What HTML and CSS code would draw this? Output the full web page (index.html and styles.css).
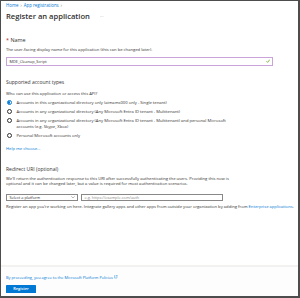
FILE: index.html
```html
<!DOCTYPE html>
<html lang="en">
<head>
<meta charset="utf-8">
<title>Register an application</title>
<link rel="stylesheet" href="styles.css">
</head>
<body>
<div class="frame">
  <nav class="crumbs">
    <a class="crumb">Home</a><span class="sep">&#8250;</span><a class="crumb">App registrations</a><span class="sep">&#8250;</span>
  </nav>
  <header class="head">
    <h1 class="title">Register an application</h1>
    <span class="more">&middot;&middot;&middot;</span>
  </header>
  <main class="content">
    <section class="sec sec-name">
      <h2 class="label"><span class="req">*</span> Name</h2>
      <p class="text desc">The user-facing display name for this application (this can be changed later).</p>
      <div class="field name-field">
        <span class="value">MDE_Cleanup_Script</span>
        <svg class="check" viewBox="0 0 10 10" width="4" height="4"><path d="M1 5.5 L4 8.5 L9.5 1.5" fill="none" stroke="#57a300" stroke-width="1.8"/></svg>
      </div>
    </section>

    <section class="sec sec-accounts">
      <h2 class="heading">Supported account types</h2>
      <p class="text q">Who can use this application or access this API?</p>
      <ul class="radios">
        <li class="radio-row"><span class="radio on"></span><span class="radio-text">Accounts in this organizational directory only (aimams000 only - Single tenant)</span></li>
        <li class="radio-row"><span class="radio"></span><span class="radio-text">Accounts in any organizational directory (Any Microsoft Entra ID tenant - Multitenant)</span></li>
        <li class="radio-row"><span class="radio"></span><span class="radio-text">Accounts in any organizational directory (Any Microsoft Entra ID tenant - Multitenant) and personal Microsoft<br>accounts (e.g. Skype, Xbox)</span></li>
        <li class="radio-row"><span class="radio"></span><span class="radio-text">Personal Microsoft accounts only</span></li>
      </ul>
      <a class="text link help">Help me choose...</a>
    </section>

    <section class="sec sec-redirect">
      <h2 class="heading">Redirect URI (optional)</h2>
      <p class="text rdesc">We'll return the authentication response to this URI after successfully authenticating the users. Providing this now is<br>optional and it can be changed later, but a value is required for most authentication scenarios.</p>
      <div class="uri-row">
        <div class="field select"><span class="value">Select a platform</span>
          <svg class="chev" viewBox="0 0 10 6" width="4" height="2.4"><path d="M0.8 0.8 L5 5 L9.2 0.8" fill="none" stroke="#605e5c" stroke-width="1.1"/></svg>
        </div>
        <div class="field url"><span class="value ph">e.g. https://example.com/auth</span></div>
      </div>
      <p class="text note">Register an app you're working on here. Integrate gallery apps and other apps from outside your organization by adding from <a class="link">Enterprise applications</a>.</p>
    </section>
  </main>
  <footer class="foot">
    <p class="text policy"><a class="link">By proceeding, you agree to the Microsoft Platform Policies</a>
      <svg class="ext" viewBox="0 0 10 10" width="3.6" height="3.6"><path d="M4 1.5 H1.5 V8.5 H8.5 V6 M5.5 1 H9 V4.5 M9 1 L4.5 5.5" fill="none" stroke="#0078d4" stroke-width="1"/></svg>
    </p>
    <button class="btn">Register</button>
  </footer>
</div>
</body>
</html>
```

FILE: styles.css
```css
* { box-sizing: border-box; }
html, body { margin: 0; padding: 0; background: #ffffff; }
body { font-family: "Segoe UI", "Open Sans", "Noto Sans", sans-serif; color: #323130; }

.frame {
  width: 300px;
  height: 298px;
  border-top: 1px solid #4d4d4d;
  border-left: 1px solid #4d4d4d;
  border-right: 2px solid #4d4d4d;
  border-bottom: 2px solid #4d4d4d;
  display: flex;
  flex-direction: column;
  overflow: hidden;
}

.crumbs {
  margin: 1px 0 0 5px;
  height: 6px;
  line-height: 6px;
  font-size: 4.4px;
  display: flex;
  align-items: center;
  gap: 1.8px;
}
.crumb { color: #0078d4; }
.sep { color: #8a8886; font-size: 5.5px; }

.head {
  margin: 3px 0 0 5px;
  height: 10px;
  display: flex;
  align-items: center;
  gap: 10px;
}
.title {
  margin: 0;
  font-size: 7.6px;
  font-weight: 600;
  line-height: 10px;
  color: #323130;
}
.more { color: #8a8886; font-size: 4px; letter-spacing: 0.2px; }

.content { flex: 1; padding: 0 0 0 5px; }
.sec { margin: 0; }

.text { margin: 0; font-size: 4.15px; line-height: 5px; }

.sec-name { padding-top: 15.5px; }
.label {
  margin: 0;
  font-size: 5.4px;
  line-height: 7px;
  font-weight: 400;
}
.req { color: #a4262c; }
.desc { margin-top: 3px; }

.field {
  border: 0.7px solid #8a8886;
  height: 8.5px;
  display: flex;
  align-items: center;
  padding: 0 2.5px;
  font-size: 3.9px;
  background: #fff;
}
.name-field {
  margin-top: 5.5px;
  width: 267px;
  border: 0.8px solid #caa3da;
  justify-content: space-between;
}
.check { display: block; }

.sec-accounts { padding-top: 13.5px; }
.heading {
  margin: 0;
  font-size: 5px;
  line-height: 7px;
  font-weight: 400;
  color: #323130;
}
.q { margin-top: 5px; }

.radios {
  list-style: none;
  margin: 3.5px 0 0;
  padding: 0;
  display: flex;
  flex-direction: column;
  gap: 3px;
}
.radio-row {
  display: flex;
  align-items: flex-start;
  gap: 4.7px;
  font-size: 4.15px;
  line-height: 6px;
}
.radio {
  flex: none;
  width: 5.2px;
  height: 5.2px;
  margin: 0.4px 0 0 0.5px;
  border: 0.7px solid #323130;
  border-radius: 50%;
  display: flex;
  align-items: center;
  justify-content: center;
}
.radio.on { border-color: #0078d4; }
.radio.on::after {
  content: "";
  width: 2.6px;
  height: 2.6px;
  border-radius: 50%;
  background: #0078d4;
}

.link { color: #0078d4; text-decoration: none; }
.help { display: block; margin-top: 7.5px; }

.sec-redirect { padding-top: 15px; }
.rdesc { margin-top: 3px; }

.uri-row {
  margin-top: 7.5px;
  display: flex;
  gap: 3px;
}
.select { width: 72px; justify-content: space-between; height: 7.5px; }
.url { width: 142px; height: 7.5px; }
.ph { color: #8a8886; }
.chev { display: block; }
.note { margin-top: 3px; }

.foot {
  border-top: 2px solid #f3f2f1;
  padding: 8px 0 3px 5px;
  background: #fdfdfd;
}
.policy { display: flex; align-items: center; gap: 1.5px; font-size: 3.9px; }
.ext { display: block; }
.btn {
  margin-top: 5.5px;
  display: block;
  width: 30px;
  height: 8px;
  padding: 0;
  border: none;
  border-radius: 0.6px;
  background: #0078d4;
  color: #ffffff;
  font-family: inherit;
  font-size: 3.9px;
  font-weight: 600;
  line-height: 8px;
}
```
